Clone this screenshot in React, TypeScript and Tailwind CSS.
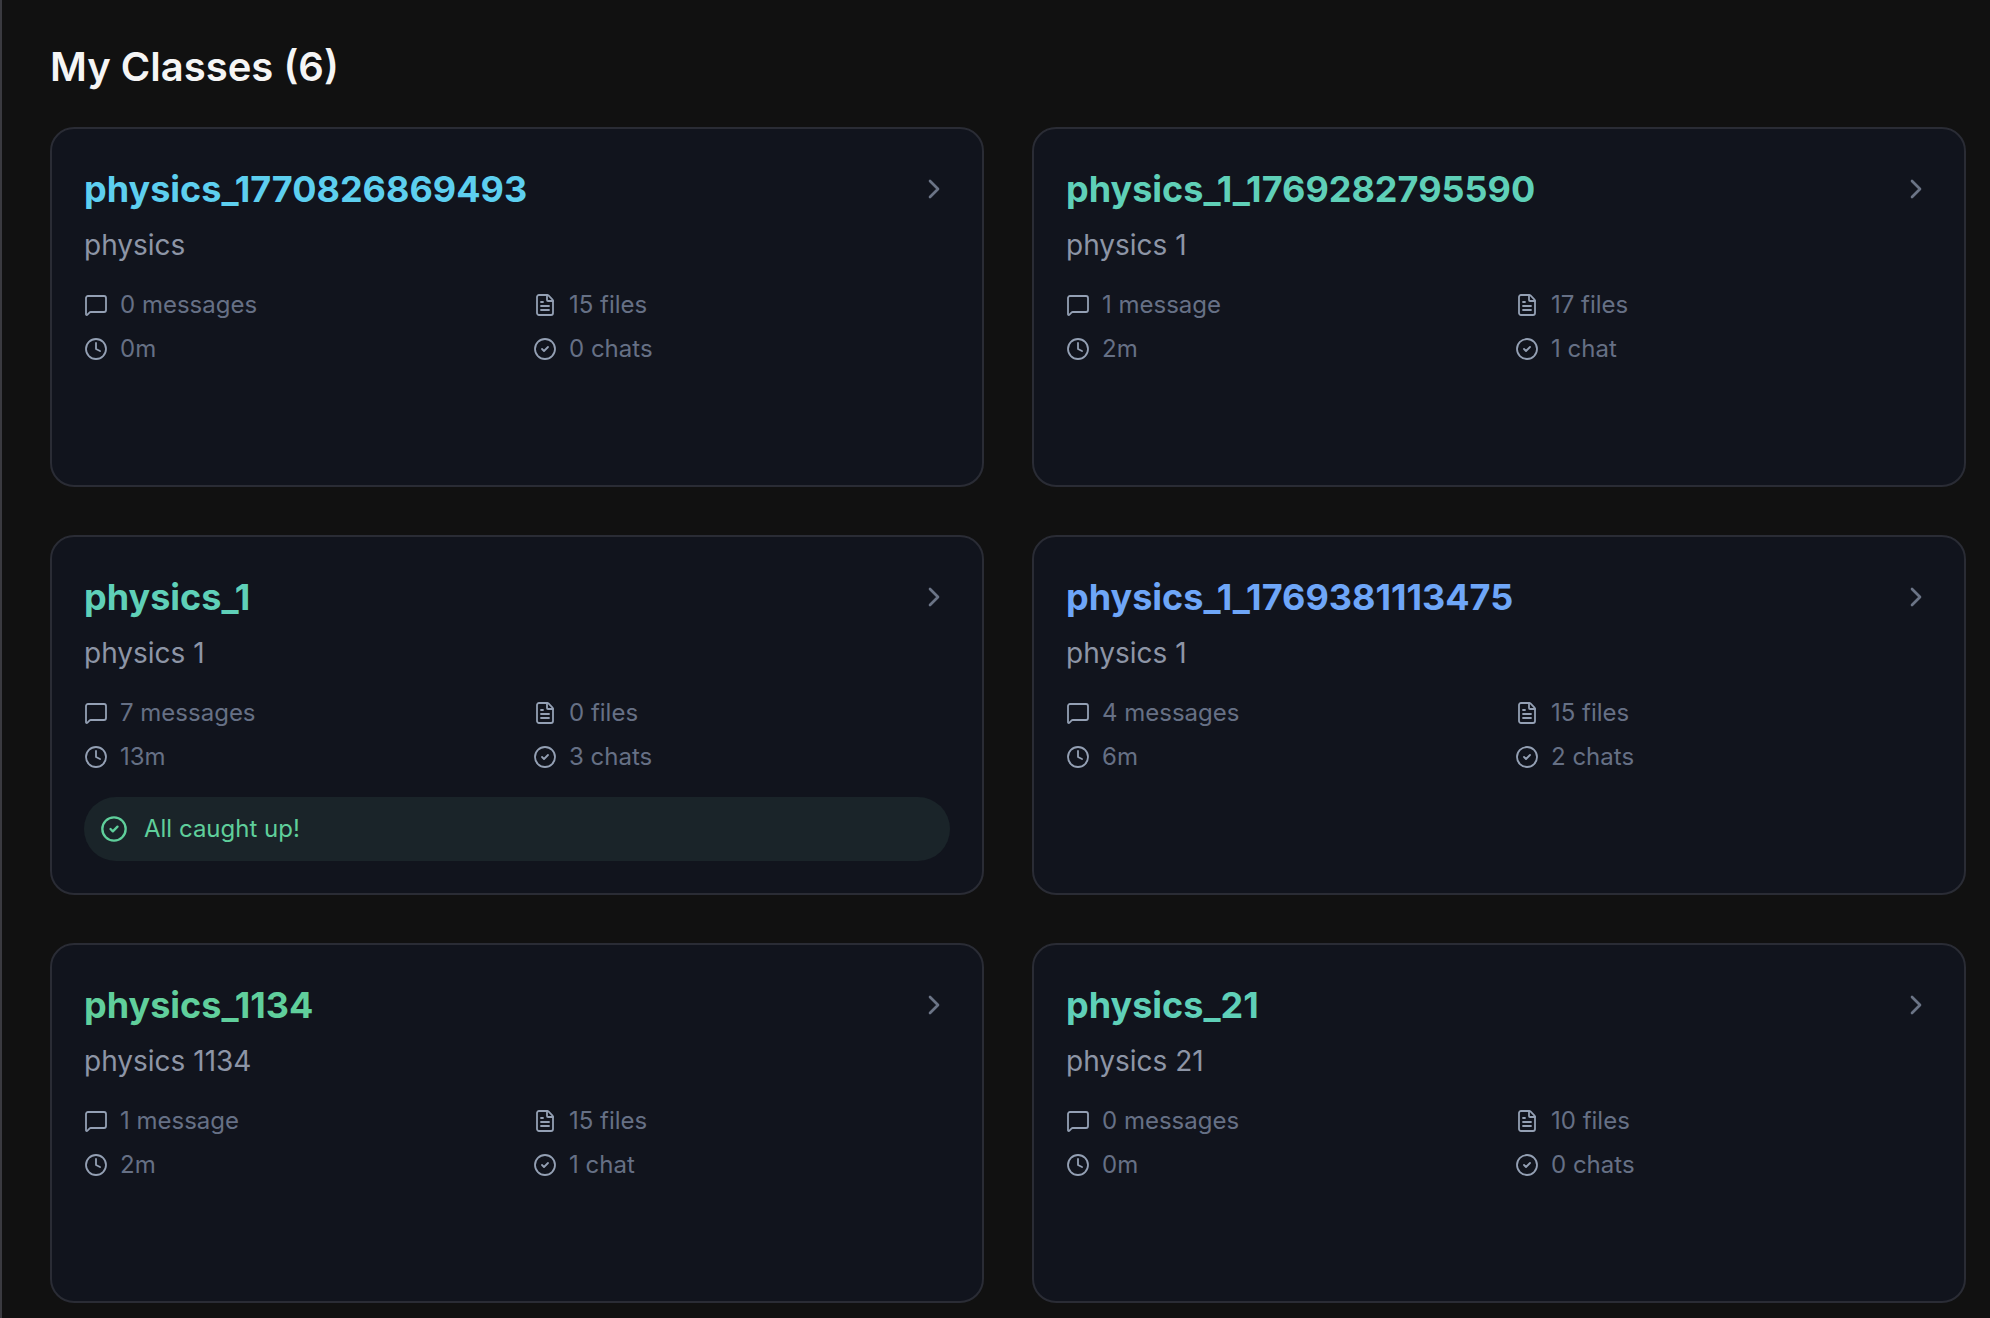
import { FC } from 'react';
import { ChevronRight, CircleCheck, Clock, FileText, MessageSquare } from 'lucide-react';

interface IClassCard {
  id: string;
  subject: string;
  messages: string;
  files: string;
  time: string;
  chats: string;
  titleClass: string;
  caughtUp?: boolean;
}

const classes: IClassCard[] = [
  { id: 'physics_1770826869493', subject: 'physics', messages: '0 messages', files: '15 files', time: '0m', chats: '0 chats', titleClass: 'text-[#5dcfef]' },
  { id: 'physics_1_1769282795590', subject: 'physics 1', messages: '1 message', files: '17 files', time: '2m', chats: '1 chat', titleClass: 'text-[#5fd0b8]' },
  { id: 'physics_1', subject: 'physics 1', messages: '7 messages', files: '0 files', time: '13m', chats: '3 chats', titleClass: 'text-[#5fd0b8]', caughtUp: true },
  { id: 'physics_1_1769381113475', subject: 'physics 1', messages: '4 messages', files: '15 files', time: '6m', chats: '2 chats', titleClass: 'text-[#6ea6f8]' },
  { id: 'physics_1134', subject: 'physics 1134', messages: '1 message', files: '15 files', time: '2m', chats: '1 chat', titleClass: 'text-[#60cf9c]' },
  { id: 'physics_21', subject: 'physics 21', messages: '0 messages', files: '10 files', time: '0m', chats: '0 chats', titleClass: 'text-[#5fd0b8]' },
];

const Meta: FC<{ icon: typeof Clock; label: string }> = ({ icon: Icon, label }) => (
  <div className="flex items-center gap-[12px] h-[44px]">
    <Icon className="w-[24px] h-[24px] text-[#94a0b4] shrink-0" strokeWidth={1.8} />
    <span className="text-[24px] text-[#667085]">{label}</span>
  </div>
);

const ClassCard: FC<IClassCard> = ({ id, subject, messages, files, time, chats, titleClass, caughtUp }) => (
  <div className="h-[360px] rounded-[24px] border-2 border-[#2a2c35] bg-[#11141d] px-[32px] pt-[32px]">
    <div className="flex items-center justify-between h-[56px]">
      <div className={`text-[36px] font-bold ${titleClass}`}>{id}</div>
      <ChevronRight className="w-[32px] h-[32px] text-[#6b7486]" strokeWidth={2} />
    </div>
    <div className="text-[28px] text-[#8d95a6] mt-[7px] leading-[42px]">{subject}</div>
    <div className="grid grid-cols-2 gap-x-[32px] mt-[17px]">
      <Meta icon={MessageSquare} label={messages} />
      <Meta icon={FileText} label={files} />
      <Meta icon={Clock} label={time} />
      <Meta icon={CircleCheck} label={chats} />
    </div>
    {caughtUp && (
      <div className="flex items-center gap-[16px] h-[64px] mt-[18px] rounded-full bg-[#1a2429] px-[16px] text-[#5fcf9b]">
        <CircleCheck className="w-[28px] h-[28px]" strokeWidth={2} />
        <span className="text-[24px]">All caught up!</span>
      </div>
    )}
  </div>
);

export default function App() {
  return (
    <div className="min-h-[1318px] border-l-2 border-[#3a3a40] bg-[#111111] pl-[48px] pr-[24px] pt-[41px] font-['Inter',sans-serif]">
      <h1 className="text-[40px] leading-[52px] font-semibold text-[#f5f5f5] mb-[34px]">My Classes (6)</h1>
      <div className="grid grid-cols-2 gap-x-[48px] gap-y-[48px]">
        {classes.map((c) => (
          <ClassCard key={c.id} {...c} />
        ))}
      </div>
    </div>
  );
}
